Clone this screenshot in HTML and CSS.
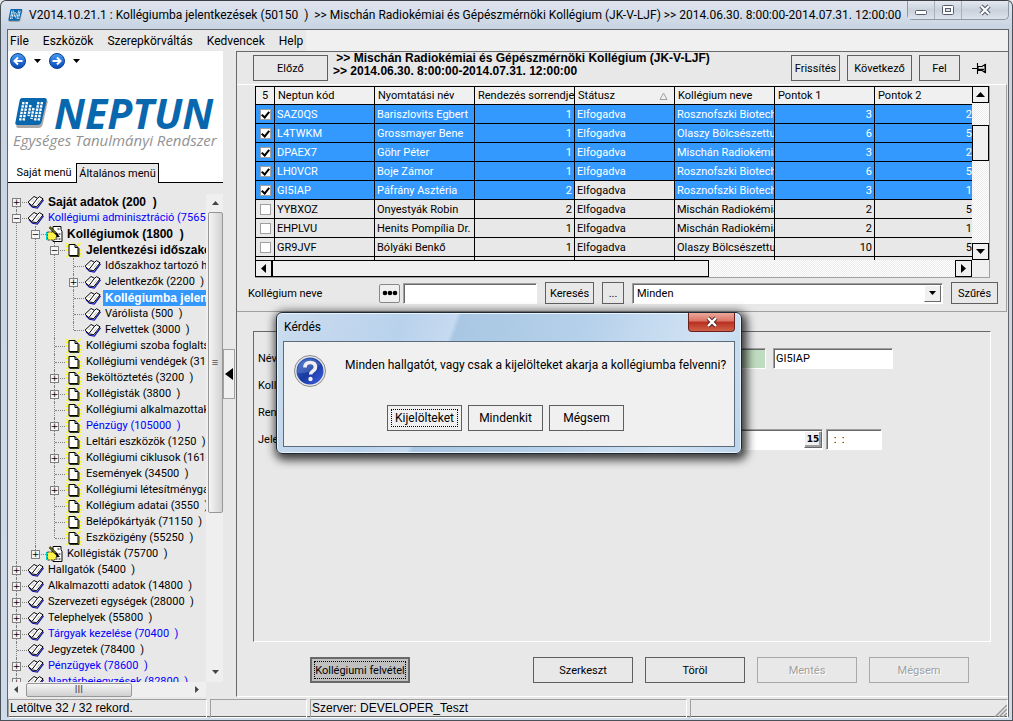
FILE: index.html
```html
<!DOCTYPE html>
<html lang="hu">
<head>
<meta charset="utf-8">
<title>Neptun – Kollégiumba jelentkezések</title>
<link rel="stylesheet" href="styles.css">
</head>
<body>
<svg class="defs" aria-hidden="true">
  <symbol id="book" viewBox="0 0 16 16">
    <path d="M1.500 9.500 5 13.300l4.800.7L16 5.800" fill="none" stroke="#1010b0" stroke-width="1.200"/>
    <path d="M.500 8.200 6.500 2.500 10 4.300 12 2.700 15.500 4.800 9.300 12.600 4.800 12z" fill="#fff" stroke="#000"/>
    <path d="M10 4.300 4.500 11.500" fill="none" stroke="#000"/>
    <path d="M12.500 5.500 8.500 10.500M6.800 5 4 8" fill="none" stroke="#aaa" stroke-width=".8"/>
  </symbol>
  <symbol id="page" viewBox="0 0 16 16">
    <path d="M1 1l3 3M8 0v3M15 1l-3 3M0 8h3M16 8h-3M1 15l3-3M15 15l-3-3M8 16v-2M0 4l3 1M16 12l-3-1" stroke="#ff0" stroke-width="1.500"/>
    <path d="M3.500 2.500h6l3 3v8h-9z" fill="#fff" stroke="#000"/>
    <path d="M9.500 2.500v3h3" fill="none" stroke="#000"/>
    <path d="M13.500 6v8.500H4" fill="none" stroke="#000" stroke-width=".8"/>
  </symbol>
  <symbol id="hand" viewBox="0 0 16 16">
    <path d="M6.500.500h8v3l1 2v10h-9z" fill="#fff" stroke="#000"/>
    <path d="M9 8h5M9 10.500h4M9 13h5M11 3h3" stroke="#000" stroke-dasharray="2 1"/>
    <path d="M1 6h6l3 2v3l-2 3H1z" fill="#fff04a" stroke="#000" stroke-width=".8" stroke-dasharray="2 1"/>
    <path d="M0 6v8" stroke="#0cc" stroke-width="2"/>
    <path d="M3 1l7 7 2 3" fill="none" stroke="#000" stroke-width="2.200"/>
    <path d="M3 1l6 6" stroke="#ff0" stroke-width=".8"/>
  </symbol>
  <symbol id="mark" viewBox="0 0 34 32">
    <path d="M8 3h23q3 0 2 3l-5 22q-1 3-4 3H4q-3 0-2-3L6 6q0-2 2-3z" fill="#a9a9a9"/>
    <path d="M7 1h23q3 0 2 3l-5 21q-1 3-4 3H3q-3 0-2-3L5 4q0-2 2-3z" fill="#0867ad"/>
    <path d="M9 5 5.500 24M12.500 5 9 24M16 8l-2 11M19 11l-2 11M24 5l-3.500 19M27.500 5 24 24" stroke="#fff" stroke-width="2.400" stroke-dasharray="2.400 .9"/>
  </symbol>
  <symbol id="up" viewBox="0 0 9 5"><path d="M0 5 4.500 0 9 5z"/></symbol>
  <symbol id="down" viewBox="0 0 9 5"><path d="M0 0h9L4.500 5z"/></symbol>
  <symbol id="left" viewBox="0 0 5 9"><path d="M5 0v9L0 4.500z"/></symbol>
  <symbol id="right" viewBox="0 0 5 9"><path d="M0 0v9l5-4.500z"/></symbol>
  <linearGradient id="ball" x1="0" y1="0" x2="0" y2="1"><stop offset="0" stop-color="#4a9cf2"/><stop offset="1" stop-color="#0747b4"/></linearGradient>
  <linearGradient id="ask" x1="0" y1="0" x2="1" y2="1"><stop offset="0" stop-color="#3e6bd0"/><stop offset=".5" stop-color="#1739a0"/><stop offset="1" stop-color="#3f5fe8"/></linearGradient>
</svg>

<div class="window">
  <header class="titlebar">
    <svg class="app-icon"><use href="#mark"/></svg>
    <h1>V2014.10.21.1 : Kollégiumba jelentkezések (50150&nbsp; )&nbsp; &gt;&gt; Mischán Radiokémiai és Gépészmérnöki Kollégium (JK-V-LJF) &gt;&gt; 2014.06.30. 8:00:00-2014.07.31. 12:00:00</h1>
    <div class="window-buttons">
      <button aria-label="Kis méret"><svg width="14" height="12"><rect x="1.500" y="6.500" width="11" height="4" rx="1" fill="#fff" stroke="#555c6b"/></svg></button>
      <button aria-label="Teljes méret"><svg width="14" height="12"><rect x="1.500" y="1.500" width="11" height="9" rx="1" fill="#fff" stroke="#555c6b"/><rect x="4.500" y="4.500" width="5" height="3" fill="#dde" stroke="#555c6b"/></svg></button>
      <button class="wide" aria-label="Bezárás"><svg width="14" height="12"><path d="M3 2l8 8M11 2l-8 8" stroke="#555c6b" stroke-width="4.400"/><path d="M3 2l8 8M11 2l-8 8" stroke="#fff" stroke-width="2.200"/></svg></button>
    </div>
  </header>

  <div class="client">
    <nav class="menubar">
      <button>File</button><button>Eszközök</button><button>Szerepkörváltás</button><button>Kedvencek</button><button>Help</button>
    </nav>

    <div class="workspace">
      <aside class="sidebar">
        <div class="history">
          <button aria-label="Vissza"><svg width="16" height="16"><circle cx="8" cy="8" r="7.500" fill="url(#ball)" stroke="#0a3f9a"/><path d="M12.500 8H5M8 4.500 4.500 8 8 11.500" fill="none" stroke="#fff" stroke-width="2"/></svg></button>
          <button aria-label="Vissza lista"><svg width="7" height="4"><use href="#down"/></svg></button>
          <button aria-label="Előre"><svg width="16" height="16"><circle cx="8" cy="8" r="7.500" fill="url(#ball)" stroke="#0a3f9a"/><path d="M3.500 8H11M8 4.500 11.500 8 8 11.500" fill="none" stroke="#fff" stroke-width="2"/></svg></button>
          <button aria-label="Előre lista"><svg width="7" height="4"><use href="#down"/></svg></button>
        </div>
        <div class="logo">
          <div class="logo-name"><svg><use href="#mark"/></svg><span>NEPTUN</span></div>
          <p>Egységes Tanulmányi Rendszer</p>
        </div>
        <div class="tabs">
          <button>Saját menü</button><button class="active">Általános menü</button><i></i>
        </div>

        <div class="tree-box">
          <ul class="tree">
            <li><div class="node bold"><button>+</button><svg><use href="#book"/></svg><span>Saját adatok (200&nbsp; )</span></div></li>
            <li><div class="node link"><button>−</button><svg><use href="#book"/></svg><span>Kollégiumi adminisztráció (75650&nbsp; )</span></div>
              <ul>
                <li><div class="node bold"><button>−</button><svg><use href="#hand"/></svg><span>Kollégiumok (1800&nbsp; )</span></div>
                  <ul>
                    <li><div class="node bold"><button>−</button><svg><use href="#page"/></svg><span>Jelentkezési időszakok</span></div>
                      <ul>
                        <li><div class="node leaf"><svg><use href="#book"/></svg><span>Időszakhoz tartozó hallgatók</span></div></li>
                        <li><div class="node"><button>+</button><svg><use href="#book"/></svg><span>Jelentkezők (2200&nbsp; )</span></div></li>
                        <li><div class="node leaf bold selected"><svg><use href="#book"/></svg><span>Kollégiumba jelentkezések</span></div></li>
                        <li><div class="node leaf"><svg><use href="#book"/></svg><span>Várólista (500&nbsp; )</span></div></li>
                        <li><div class="node leaf"><svg><use href="#book"/></svg><span>Felvettek (3000&nbsp; )</span></div></li>
                      </ul>
                    </li>
                    <li><div class="node leaf"><svg><use href="#page"/></svg><span>Kollégiumi szoba foglaltság</span></div></li>
                    <li><div class="node leaf"><svg><use href="#page"/></svg><span>Kollégiumi vendégek (3150&nbsp; )</span></div></li>
                    <li><div class="node"><button>+</button><svg><use href="#page"/></svg><span>Beköltöztetés (3200&nbsp; )</span></div></li>
                    <li><div class="node"><button>+</button><svg><use href="#page"/></svg><span>Kollégisták (3800&nbsp; )</span></div></li>
                    <li><div class="node leaf"><svg><use href="#page"/></svg><span>Kollégiumi alkalmazottak (</span></div></li>
                    <li><div class="node link"><button>+</button><svg><use href="#page"/></svg><span>Pénzügy (105000&nbsp; )</span></div></li>
                    <li><div class="node leaf"><svg><use href="#page"/></svg><span>Leltári eszközök (1250&nbsp; )</span></div></li>
                    <li><div class="node"><button>+</button><svg><use href="#page"/></svg><span>Kollégiumi ciklusok (16100&nbsp; )</span></div></li>
                    <li><div class="node leaf"><svg><use href="#page"/></svg><span>Események (34500&nbsp; )</span></div></li>
                    <li><div class="node"><button>+</button><svg><use href="#page"/></svg><span>Kollégiumi létesítménygazdálkodás</span></div></li>
                    <li><div class="node leaf"><svg><use href="#page"/></svg><span>Kollégium adatai (3550&nbsp; )</span></div></li>
                    <li><div class="node leaf"><svg><use href="#page"/></svg><span>Belépőkártyák (71150&nbsp; )</span></div></li>
                    <li><div class="node leaf"><svg><use href="#page"/></svg><span>Eszközigény (55250&nbsp; )</span></div></li>
                  </ul>
                </li>
                <li><div class="node"><button>+</button><svg><use href="#hand"/></svg><span>Kollégisták (75700&nbsp; )</span></div></li>
              </ul>
            </li>
            <li><div class="node"><button>+</button><svg><use href="#book"/></svg><span>Hallgatók (5400&nbsp; )</span></div></li>
            <li><div class="node"><button>+</button><svg><use href="#book"/></svg><span>Alkalmazotti adatok (14800&nbsp; )</span></div></li>
            <li><div class="node"><button>+</button><svg><use href="#book"/></svg><span>Szervezeti egységek (28000&nbsp; )</span></div></li>
            <li><div class="node"><button>+</button><svg><use href="#book"/></svg><span>Telephelyek (55800&nbsp; )</span></div></li>
            <li><div class="node link"><button>+</button><svg><use href="#book"/></svg><span>Tárgyak kezelése (70400&nbsp; )</span></div></li>
            <li><div class="node leaf"><svg><use href="#book"/></svg><span>Jegyzetek (78400&nbsp; )</span></div></li>
            <li><div class="node link"><button>+</button><svg><use href="#book"/></svg><span>Pénzügyek (78600&nbsp; )</span></div></li>
            <li><div class="node link"><button>+</button><svg><use href="#book"/></svg><span>Naptárbejegyzések (82800&nbsp; )</span></div></li>
            <li></li>
          </ul>
          <div class="soft-scroll vertical">
            <svg width="7" height="4"><use href="#up"/></svg><div class="thumb"></div><div class="space"></div><svg width="7" height="4"><use href="#down"/></svg>
          </div>
          <div class="soft-scroll horizontal">
            <svg width="4" height="7"><use href="#left"/></svg><div class="thumb"></div><div class="space"></div><svg width="4" height="7"><use href="#right"/></svg>
          </div>
        </div>
      </aside>

      <div class="splitter"><button aria-label="Panel elrejtése"><svg width="8" height="12" viewBox="0 0 8 12"><path d="M8 0v12L0 6z"/></svg></button></div>

      <main class="main">
        <div class="record-bar">
          <button class="btn previous">Előző</button>
          <h2>&nbsp;&gt;&gt; Mischán Radiokémiai és Gépészmérnöki Kollégium (JK-V-LJF)<br>&gt;&gt; 2014.06.30. 8:00:00-2014.07.31. 12:00:00</h2>
          <button class="btn refresh">Frissítés</button>
          <button class="btn next">Következő</button>
          <button class="btn up">Fel</button>
          <button class="pin" aria-label="Rögzítés"><svg width="15" height="11"><path d="M0 5.500h5M5.500 0v11M6 3.500h4l3-2v8l-3-2H6zM13.500 1v9" fill="none" stroke="#000" stroke-width="1.100"/><path d="M6 6.500h6" stroke="#000" stroke-width="1.500"/></svg></button>
        </div>

        <section class="list-panel">
          <div class="data-grid">
            <div class="table-view">
              <table>
                <colgroup><col class="c-check"><col class="c-data"><col class="c-data"><col class="c-data"><col class="c-data"><col class="c-data"><col class="c-data"><col></colgroup>
                <thead><tr><th class="count">5</th><th>Neptun kód</th><th>Nyomtatási név</th><th>Rendezés sorrendje</th><th><div class="sorted">Státusz<svg width="9" height="8"><path d="M1 7.500h7L4.500 1z" fill="none" stroke="#a0a0a0"/></svg></div></th><th>Kollégium neve</th><th>Pontok 1</th><th>Pontok 2</th></tr></thead>
                <tbody>
                  <tr class="on"><td><input type="checkbox" aria-label="SAZ0QS" checked></td><td>SAZ0QS</td><td>Bariszlovits Egbert</td><td class="num">1</td><td>Elfogadva</td><td>Rosznofszki Biotechnológiai</td><td class="num">3</td><td class="num">2</td></tr>
                  <tr class="on"><td><input type="checkbox" aria-label="L4TWKM" checked></td><td>L4TWKM</td><td>Grossmayer Bene</td><td class="num">1</td><td>Elfogadva</td><td>Olaszy Bölcsészettudományi</td><td class="num">6</td><td class="num">5</td></tr>
                  <tr class="on"><td><input type="checkbox" aria-label="DPAEX7" checked></td><td>DPAEX7</td><td>Göhr Péter</td><td class="num">1</td><td>Elfogadva</td><td>Mischán Radiokémiai</td><td class="num">3</td><td class="num">2</td></tr>
                  <tr class="on"><td><input type="checkbox" aria-label="LH0VCR" checked></td><td>LH0VCR</td><td>Boje Zámor</td><td class="num">1</td><td>Elfogadva</td><td>Rosznofszki Biotechnológiai</td><td class="num">6</td><td class="num">5</td></tr>
                  <tr class="on"><td><input type="checkbox" aria-label="GI5IAP" checked></td><td>GI5IAP</td><td>Páfrány Asztéria</td><td class="num">2</td><td class="current">Elfogadva</td><td>Rosznofszki Biotechnológiai</td><td class="num">3</td><td class="num">1</td></tr>
                  <tr><td><input type="checkbox" aria-label="YYBXOZ"></td><td>YYBXOZ</td><td>Onyestyák Robin</td><td class="num">2</td><td>Elfogadva</td><td>Mischán Radiokémiai</td><td class="num">2</td><td class="num">5</td></tr>
                  <tr><td><input type="checkbox" aria-label="EHPLVU"></td><td>EHPLVU</td><td>Henits Pompília Dr.</td><td class="num">1</td><td>Elfogadva</td><td>Mischán Radiokémiai</td><td class="num">2</td><td class="num">1</td></tr>
                  <tr><td><input type="checkbox" aria-label="GR9JVF"></td><td>GR9JVF</td><td>Bólyáki Benkő</td><td class="num">1</td><td>Elfogadva</td><td>Olaszy Bölcsészettudományi</td><td class="num">10</td><td class="num">5</td></tr>
                  <tr><td></td><td></td><td></td><td></td><td></td><td></td><td></td><td></td></tr>
                </tbody>
              </table>
            </div>
            <div class="flat-scroll vertical"><button aria-label="Fel"><svg width="9" height="5"><use href="#up"/></svg></button><div class="gap"></div><div class="thumb"></div><div class="space"></div><button aria-label="Le"><svg width="9" height="5"><use href="#down"/></svg></button></div>
            <div class="flat-scroll horizontal"><button aria-label="Balra"><svg width="5" height="9"><use href="#left"/></svg></button><div class="thumb"></div><div class="space"></div><button aria-label="Jobbra"><svg width="5" height="9"><use href="#right"/></svg></button></div>
          </div>
          <div class="filter">
            <label for="dorm">Kollégium neve</label>
            <button class="dots" aria-label="Keresési feltétel"><svg width="16" height="6"><circle cx="3" cy="3" r="2.300"/><circle cx="8" cy="3" r="2.300"/><circle cx="13" cy="3" r="2.300"/></svg></button>
            <input id="dorm" class="field search" type="text">
            <button class="btn find">Keresés</button>
            <button class="btn more">...</button>
            <div class="combo"><select class="field" aria-label="Szűrő"><option>Minden</option></select><span><svg width="7" height="4"><use href="#down"/></svg></span></div>
            <button class="btn narrow">Szűrés</button>
          </div>
        </section>

        <section class="detail">
          <div class="group">
            <div class="form-row"><label for="name">Név</label><input id="name" class="field green name" type="text"><input class="field code" type="text" aria-label="Neptun kód" value="GI5IAP"></div>
            <div class="form-row"><label for="dorm2">Kollégium</label><input id="dorm2" class="field short" type="text"></div>
            <div class="form-row"><label for="order">Rendezés sorrendje</label><input id="order" class="field short" type="text"></div>
            <div class="form-row"><label for="date">Jelentkezés dátuma</label><div class="date"><input id="date" class="field" type="text"><button aria-label="Naptár">15</button></div><input class="field time" type="text" aria-label="Időpont" value=" :  :"></div>
          </div>
          <div class="actions">
            <button class="btn default">Kollégiumi felvétel</button>
            <button class="btn">Szerkeszt</button>
            <button class="btn">Töröl</button>
            <button class="btn" disabled>Mentés</button>
            <button class="btn" disabled>Mégsem</button>
          </div>
        </section>
      </main>
    </div>

    <footer class="status"><span>Letöltve 32 / 32 rekord.</span><span></span><span>Szerver: DEVELOPER_Teszt</span><span class="grip"><svg width="13" height="13"><path d="M1 13 13 1M5 13l8-8M9 13l4-4" stroke="#999" stroke-width="1.500"/></svg></span></footer>
  </div>
</div>

<div class="dialog" role="dialog" aria-labelledby="dialog-title">
  <div class="dialog-title"><h3 id="dialog-title">Kérdés</h3><button aria-label="Bezárás"><svg width="14" height="12"><path d="M3 2l8 8M11 2l-8 8" stroke="#5a2c2c" stroke-width="4.400"/><path d="M3 2l8 8M11 2l-8 8" stroke="#fff" stroke-width="2.400"/></svg></button></div>
  <div class="dialog-body">
    <div class="message">
      <svg width="32" height="32"><circle cx="16" cy="16" r="15.500" fill="#e8e8e8" stroke="#8a8a8a"/><circle cx="16" cy="16" r="13.500" fill="url(#ask)"/><path d="M3 18Q15 20 27 9A13.500 13.500 0 0 0 3 18z" fill="#fff" opacity=".15"/><path d="M11 12.500q0-5 5.200-5t5.200 4.500q0 2.500-2.700 4.200-2 1.200-2 3.300" fill="none" stroke="#f0f0f0" stroke-width="3.600"/><circle cx="16.500" cy="24" r="2.200" fill="#f0f0f0"/></svg>
      <p>Minden hallgatót, vagy csak a kijelölteket akarja a kollégiumba felvenni?</p>
    </div>
    <div class="choices"><button class="focus">Kijelölteket</button><button>Mindenkit</button><button>Mégsem</button></div>
  </div>
</div>
</body>
</html>
```
FILE: styles.css
```css
* { box-sizing: border-box; }
html, body { height: 100%; }
body { margin: 0; overflow: hidden; position: relative; font: 11px/13px Roboto, "Liberation Sans", sans-serif; color: #000; background: #e8e8e8; }
button, input, select { font: inherit; color: inherit; margin: 0; padding: 0; }
button { background: none; border: 0; display: inline-flex; align-items: center; justify-content: center; white-space: nowrap; }
h1, h2, h3, p, ul { margin: 0; padding: 0; font-size: inherit; font-weight: normal; }
ul { list-style: none; }
svg { display: block; flex: none; }
.defs { position: absolute; width: 0; height: 0; }

/* Window frame */
.window { height: 100%; display: flex; flex-direction: column; padding: 0 3px 3px 6px; background: linear-gradient(#dfe5ee, #c8d4e3 28px, #cfdbe8); border: 1px solid #4b5158; border-top-color: #3c4046; border-radius: 6px 6px 0 0; }
.titlebar { height: 28px; display: flex; align-items: center; font: 12px/16px Roboto, "Open Sans", sans-serif; }
.titlebar h1 { flex: 1; min-width: 0; white-space: nowrap; margin-left: 6px; }
.app-icon { width: 15px; height: 15px; margin-left: 1px; }
.window-buttons { display: flex; align-self: flex-start; border: 1px solid #8f98a5; border-top: 0; border-radius: 0 0 5px 5px; }
.window-buttons button { width: 27px; height: 18px; border-right: 1px solid #a7afba; background: linear-gradient(#e4e9f0, #c9d1dc 50%, #dce2ea); }
.window-buttons .wide { width: 46px; border: 0; border-radius: 0 0 5px 0; }
.client { flex: 1; min-height: 0; display: flex; flex-direction: column; border: 1px solid #646464; background: #e8e8e8; }
.menubar { height: 21px; flex: none; display: flex; padding-left: 2px; gap: 14px; background: linear-gradient(90deg, #e8e8e8 298px, #f0f0f0 298px); font: 12px/16px Roboto, "Open Sans", sans-serif; }
.workspace { flex: 1; min-height: 0; display: flex; }

/* Side panel */
.sidebar { width: 215px; flex: none; display: flex; flex-direction: column; padding-bottom: 2px; background: linear-gradient(#fff 80%, #e8e8e8 80%); }
.history { display: flex; gap: 8px; height: 18px; align-items: center; padding-left: 2px; margin-top: 1px; }
.logo { height: 93px; padding: 24px 0 0 5px; }
.logo-name { display: flex; align-items: center; height: 38px; color: #0867ad; font: italic 700 41px/38px "Open Sans", sans-serif; }
.logo-name svg { width: 37px; height: 32px; margin-right: 4px; }
.logo p { font: italic 15px/16px "Open Sans", sans-serif; color: #929292; white-space: nowrap; }
.tabs { height: 20px; display: flex; flex: none; margin-bottom: 11px; }
.tabs button { border-bottom: 1px solid #000; width: 68px; padding-left: 4px; }
.tabs .active { width: 83px; padding: 0; background: #e8e8e8; border: 1px solid #000; border-bottom: 0; }
.tabs i { flex: 1; border-bottom: 1px solid #000; }
.tree-box { flex: 1; min-height: 0; margin-top: -11px; padding-top: 11px; background: #e8e8e8; display: grid; grid-template: minmax(0, 1fr) 15px / minmax(0, 1fr) 17px; }
.tree { overflow: hidden; min-width: 0; }
.tree ul { padding-left: 19px; }
.tree li { position: relative; }
.tree li::before { content: ""; position: absolute; left: 8px; top: 0; bottom: 0; border-left: 1px dotted #808080; }
.tree li:last-child::before { bottom: auto; height: 8px; }
.tree > li:first-child::before { top: 8px; }
.node { height: 16px; display: flex; align-items: center; position: relative; white-space: nowrap; }
.node::before { content: ""; position: absolute; left: 9px; width: 10px; top: 8px; border-top: 1px dotted #808080; }
.node button { position: relative; width: 9px; height: 9px; margin: 0 6px 0 4px; border: 1px solid #808080; background: #f4f4f4; color: #000; font: 9px/7px "DejaVu Sans", sans-serif; }
.node svg { width: 17px; height: 16px; margin-right: 2px; }
.node.leaf svg { margin-left: 19px; }
.node span { padding: 0 2px; line-height: 16px; }
.bold { font: bold 12px/16px "Liberation Sans", Arial, sans-serif; }
.link { color: #00f; }
.selected span { background: #3399ff; color: #fff; }
.soft-scroll { display: flex; align-items: center; background: #efefef; fill: #444; }
.soft-scroll .thumb { border: 1px solid #979797; border-radius: 2px; background: #ddd; }
.soft-scroll.vertical { flex-direction: column; padding: 7px 0 8px 1px; }
.vertical .thumb { width: 15px; flex: 301; margin-top: 7px; background: linear-gradient(90deg, #f5f5f5, #d2d2d2); display: flex; align-items: center; justify-content: center; }
.soft-scroll .thumb::after { content: "≡"; color: #555; }
.vertical .space { flex: 158; }
.soft-scroll.horizontal { padding: 0 7px 0 6px; }
.horizontal .thumb { flex: 105; height: 14px; margin-left: 8px; background: linear-gradient(#f5f5f5, #d0d0d0); display: flex; align-items: center; justify-content: center; }
.soft-scroll.horizontal .thumb::after { content: "lll"; }
.horizontal .space { flex: 64; }
.splitter { width: 13px; flex: none; padding-top: 298px; }
.splitter button { width: 12px; height: 50px; background: #f0f0f0; border: 1px solid #a0a0a0; }

/* Main panel */
.main { flex: 1; min-width: 0; display: flex; flex-direction: column; border: 1px solid #696969; border-bottom: 1px solid #fff; border-right: 0; margin-bottom: 2px; }
.btn { height: 26px; border: 1px solid #5f5f5f; background: #e8e8e8; flex: none; }
.record-bar { height: 32px; display: flex; align-items: center; padding: 0 21px 0 16px; }
.record-bar h2 { flex: 1; min-width: 0; font: bold 12px/13px "Liberation Sans", Arial, sans-serif; white-space: nowrap; margin-left: 5px; align-self: flex-start; }
.previous { width: 75px; }
.refresh { width: 49px; }
.next { width: 65px; margin-left: 7px; }
.up { width: 41px; margin-left: 7px; }
.pin { margin-left: 12px; }
.list-panel { border: 1px solid #a0a0a0; border-top-color: #fff; border-left: 0; margin-right: 1px; padding: 1px 16px 7px 18px; flex: none; }
.data-grid { display: grid; grid-template: 174px 17px / minmax(0, 1fr) 17px; border-right: 1px solid #a0a0a0; border-bottom: 1px solid #a0a0a0; background: #f0f0f0; }
.table-view { overflow: hidden; border: 1px solid #000; border-right: 0; border-bottom: 0; }
table { width: 100%; table-layout: fixed; border-collapse: separate; border-spacing: 0; }
.c-check { width: 19px; }
.c-data { width: 100px; }
th, td { height: 19px; padding: 0 2px; text-align: left; font-weight: normal; white-space: nowrap; overflow: hidden; border-right: 1px solid #000; border-bottom: 1px solid #000; background: #e8e8e8; }
th { height: 18px; background: #f0f0f0; padding: 0 0 0 3px; }
th:last-child, td:last-child { border-right: 0; padding-right: 0; }
th.count { text-align: center; padding: 0; }
.sorted { display: flex; justify-content: space-between; align-items: center; padding-right: 6px; }
.on td { background: #3399ff; color: #fff; }
.on td.current { background: #e8e8e8; color: #000; }
td.num { text-align: right; }
td input { appearance: none; display: block; width: 11px; height: 11px; margin: 0 auto 0 2px; border: 1px solid #a0a0a0; background: #fff; color: #000; position: relative; }
td input:checked::after { content: ""; box-sizing: border-box; position: absolute; left: 2px; top: 0; width: 5px; height: 8px; border: solid #000; border-width: 0 2px 2px 0; transform: rotate(40deg); }
.flat-scroll { display: flex; background: repeating-conic-gradient(#fff 0 25%, #ececec 0 50%) 0 0 / 2px 2px; }
.flat-scroll button { flex: none; width: 17px; height: 17px; border: 1px solid #000; background: #f0f0f0; }
.flat-scroll .thumb { border: 1px solid #000; background: #f0f0f0; }
.flat-scroll.vertical { flex-direction: column; }
.flat-scroll.vertical .gap { flex: 22; }
.flat-scroll.vertical .thumb { width: 17px; flex: 35; margin: 0; }
.flat-scroll.vertical .space { flex: 83; }
.flat-scroll.horizontal .thumb { flex: 437; height: 17px; margin: 0; }
.flat-scroll.horizontal .space { flex: 247; }
.filter { display: flex; align-items: center; margin: 4px -8px 0 -7px; }
.filter label { width: 131px; }
.filter .btn { height: 22px; }
.dots { width: 21px; height: 19px; border: 1px solid #888; border-radius: 2px; background: #f0f0f0; margin-right: 3px; }
.field { height: 21px; width: 100%; border: 1px solid; border-color: #a0a0a0 #fff #fff #a0a0a0; box-shadow: inset 1px 1px #696969; border-radius: 0; background: #fff; padding: 0 2px; outline: 0; }
.search { width: 134px; flex: none; }
.find { width: 49px; margin-left: 8px; }
.more { width: 22px; margin: 0 8px; }
.combo { position: relative; flex: 1; min-width: 0; }
.combo select { appearance: none; display: block; padding-left: 4px; }
.combo span { position: absolute; right: 2px; top: 2px; width: 17px; height: 17px; display: grid; place-items: center; background: #f0f0f0; border: 1px solid; border-color: #fff #696969 #696969 #fff; pointer-events: none; }
.narrow { width: 47px; margin-left: 8px; }

.detail { flex: 1; min-height: 0; display: flex; flex-direction: column; padding: 19px 17px 13px 16px; }
.group { flex: 1; min-height: 0; border: 1px solid; border-color: #696969 #fff #fff #696969; padding: 16px 4px 0; display: flex; flex-direction: column; gap: 6px; }
.form-row { display: flex; align-items: center; height: 21px; }
.form-row label { width: 128px; flex: none; }
.form-row .short { width: 200px; }
.form-row .name { width: 380px; }
.form-row .green { background: #c0dcc0; }
.form-row .code { width: 120px; margin-left: 7px; }
.date { width: 437px; position: relative; }
.date input { display: block; }
.date button { position: absolute; right: 1px; top: 2px; width: 18px; height: 17px; border: 1px solid; border-color: #fff #696969 #696969 #fff; background: #f0f0f0; box-shadow: inset -2px -2px #a0a0a0; font: bold 9px/11px "DejaVu Sans", sans-serif; }
.form-row .time { width: 56px; margin-left: 3px; padding-left: 4px; white-space: pre; }
.actions { display: flex; gap: 12px; justify-content: flex-end; padding: 15px 22px 0 57px; }
.actions .btn { width: 100px; }
.actions .default { margin-right: auto; background: #c0c0c0; border: 2px solid #696969; outline: 1px dotted #000; outline-offset: -5px; }
.btn:disabled { color: #a0a0a0; border-color: #a9a9a9; text-shadow: 1px 1px #fff; }

.status { height: 17px; flex: none; display: grid; grid-template-columns: 199fr 97fr 377fr 318fr; gap: 3px; font: 12px/17px "Liberation Sans", Arial, sans-serif; }
.status span { border: 1px solid; border-color: #a0a0a0 #fff #fff #a0a0a0; padding-left: 1px; white-space: nowrap; }
.status .grip { display: flex; justify-content: flex-end; align-items: flex-end; }

/* Message box */
.dialog { position: absolute; left: 276px; top: 312px; width: 466px; padding: 0 6px 6px; border: 1px solid #1f2a35; border-radius: 6px; background: linear-gradient(110deg, #cbdcee, #b9d2ec 25%, #c6daf0 35%, #a9c7e3 36%, #b5d0ea 60%, #d2e3f4 85%, #bcd5ec); box-shadow: inset 0 0 0 1px #e8f2fb, 2px 3px 10px 3px rgba(0, 0, 0, .75); font: 12px/16px Roboto, "Open Sans", sans-serif; }
.dialog-title { height: 28px; display: flex; justify-content: space-between; align-items: center; padding-left: 1px; }
.dialog-title button { align-self: flex-start; width: 47px; height: 19px; border: 1px solid #6b2020; border-top: 0; border-radius: 0 0 4px 4px; background: linear-gradient(#eba89c, #d97364 45%, #b92f1c 50%, #cf6048); }
.dialog-body { border: 1px solid #5a6b7b; background: #f0f0f0; padding: 13px 10px 15px; }
.message { display: flex; gap: 19px; }
.message p { padding-top: 2px; white-space: nowrap; }
.choices { display: flex; gap: 6px; padding: 18px 0 0 93px; }
.choices button { width: 75px; height: 26px; border: 1px solid #5f5f5f; }
.choices .focus { outline: 1px dotted #000; outline-offset: -5px; }
```
